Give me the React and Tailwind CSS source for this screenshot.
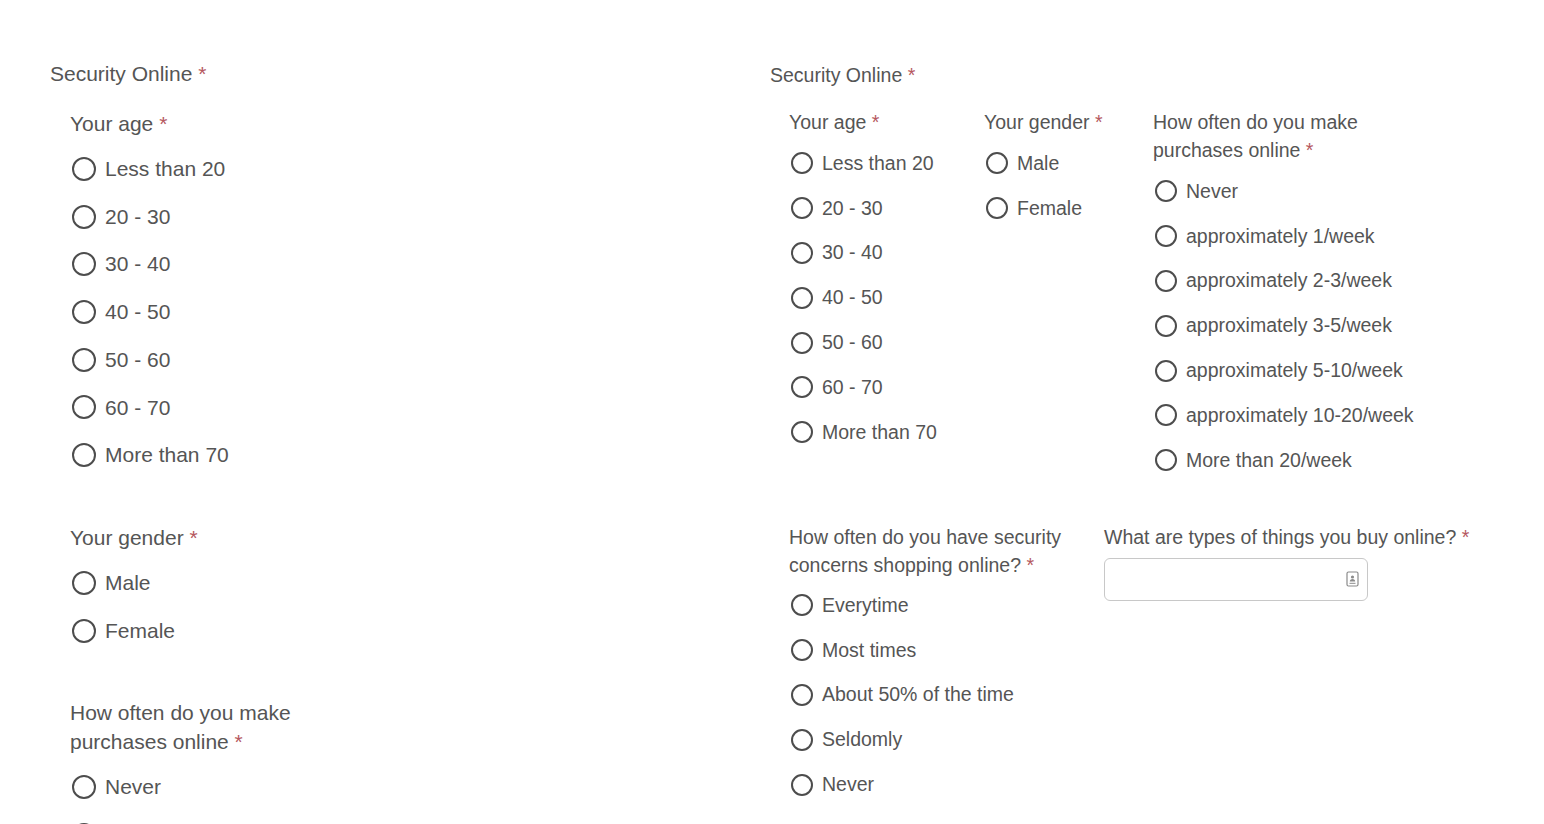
import React from "react";

const ageOptions = ["Less than 20", "20 - 30", "30 - 40", "40 - 50", "50 - 60", "60 - 70", "More than 70"];
const genderOptions = ["Male", "Female"];
const purchaseOptions = [
  "Never",
  "approximately 1/week",
  "approximately 2-3/week",
  "approximately 3-5/week",
  "approximately 5-10/week",
  "approximately 10-20/week",
  "More than 20/week",
];
const concernOptions = ["Everytime", "Most times", "About 50% of the time", "Seldomly", "Never"];

function Req() {
  return <span className="text-[#b5585e]">{"\u00a0*"}</span>;
}

// big = left (mobile) form, small = right (desktop) form
function Radio({ label, big }) {
  return (
    <label
      className={`flex items-center ${big ? "h-[47.7px] pl-[2px] text-[21px]" : "h-[44.8px] pl-[2px] text-[19.5px]"}`}
    >
      <span
        className={`shrink-0 rounded-full border-2 border-[#4d4d4d] bg-white ${
          big ? "w-[24px] h-[24px] mr-[9px]" : "w-[22px] h-[22px] mr-[9px]"
        }`}
      />
      <span className="whitespace-nowrap">{label}</span>
    </label>
  );
}

function Question({ title, options, big, className = "", labelClass = "", gap = "mt-[7px]" }) {
  return (
    <div className={className}>
      <div className={`${big ? "text-[21px] leading-[29px]" : "text-[19.5px] leading-[28px]"} ${labelClass}`}>
        {title}
        <Req />
      </div>
      <div className={gap}>
        {options.map((o) => (
          <Radio key={o} label={o} big={big} />
        ))}
      </div>
    </div>
  );
}

function CardIcon() {
  return (
    <svg width="13" height="16" viewBox="0 0 13 16" fill="none">
      <rect x="1" y="1" width="11" height="14" rx="1.5" stroke="#8a8a8a" strokeWidth="1.2" />
      <circle cx="6.5" cy="6" r="1.6" fill="#8a8a8a" />
      <path d="M3.8 10.5c0-1.5 1.2-2.4 2.7-2.4s2.7.9 2.7 2.4z" fill="#8a8a8a" />
      <path d="M3.5 12.3h6" stroke="#8a8a8a" strokeWidth="1" />
    </svg>
  );
}

export default function App() {
  return (
    <div
      className="w-[1544px] h-[824px] overflow-hidden bg-white text-[#555555] flex"
      style={{ fontFamily: '"Liberation Sans", Arial, sans-serif' }}
    >
      {/* left: narrow layout */}
      <div className="w-[770px] shrink-0 pt-[62px] pl-[50px]">
        <div className="text-[21px] leading-[24px]">
          Security Online
          <Req />
        </div>
        <div className="ml-[20px] mt-[23px]">
          <Question title="Your age" options={ageOptions} big />
          <Question title="Your gender" options={genderOptions} big className="mt-[44.5px]" />
          <Question
            title="How often do you make purchases online"
            options={purchaseOptions}
            big
            className="mt-[43.5px]"
            labelClass="w-[260px]"
          />
        </div>
      </div>

      {/* right: wide layout */}
      <div className="flex-1 pt-[63px]">
        <div className="text-[19.5px] leading-[24px]">
          Security Online
          <Req />
        </div>
        <div className="ml-[19px] mt-[21px] flex">
          <Question title="Your age" options={ageOptions} className="w-[195px]" gap="mt-[5px]" />
          <Question title="Your gender" options={genderOptions} className="w-[169px]" gap="mt-[5px]" />
          <Question
            title="How often do you make purchases online"
            options={purchaseOptions}
            className="w-[260px]"
            labelClass="w-[230px]"
            gap="mt-[5px]"
          />
        </div>
        <div className="ml-[19px] mt-[40px] flex">
          <Question
            title="How often do you have security concerns shopping online?"
            options={concernOptions}
            className="w-[315px]"
            labelClass="w-[300px]"
            gap="mt-[4.5px]"
          />
          <div className="w-[400px]">
            <div className="text-[19.5px] leading-[28px] whitespace-nowrap">
              What are types of things you buy online?
              <Req />
            </div>
            <div className="mt-[7px] w-[264px] h-[43px] rounded-[6px] border border-[#c8c8c8] flex items-center justify-end pr-[8px]">
              <CardIcon />
            </div>
          </div>
        </div>
      </div>
    </div>
  );
}
